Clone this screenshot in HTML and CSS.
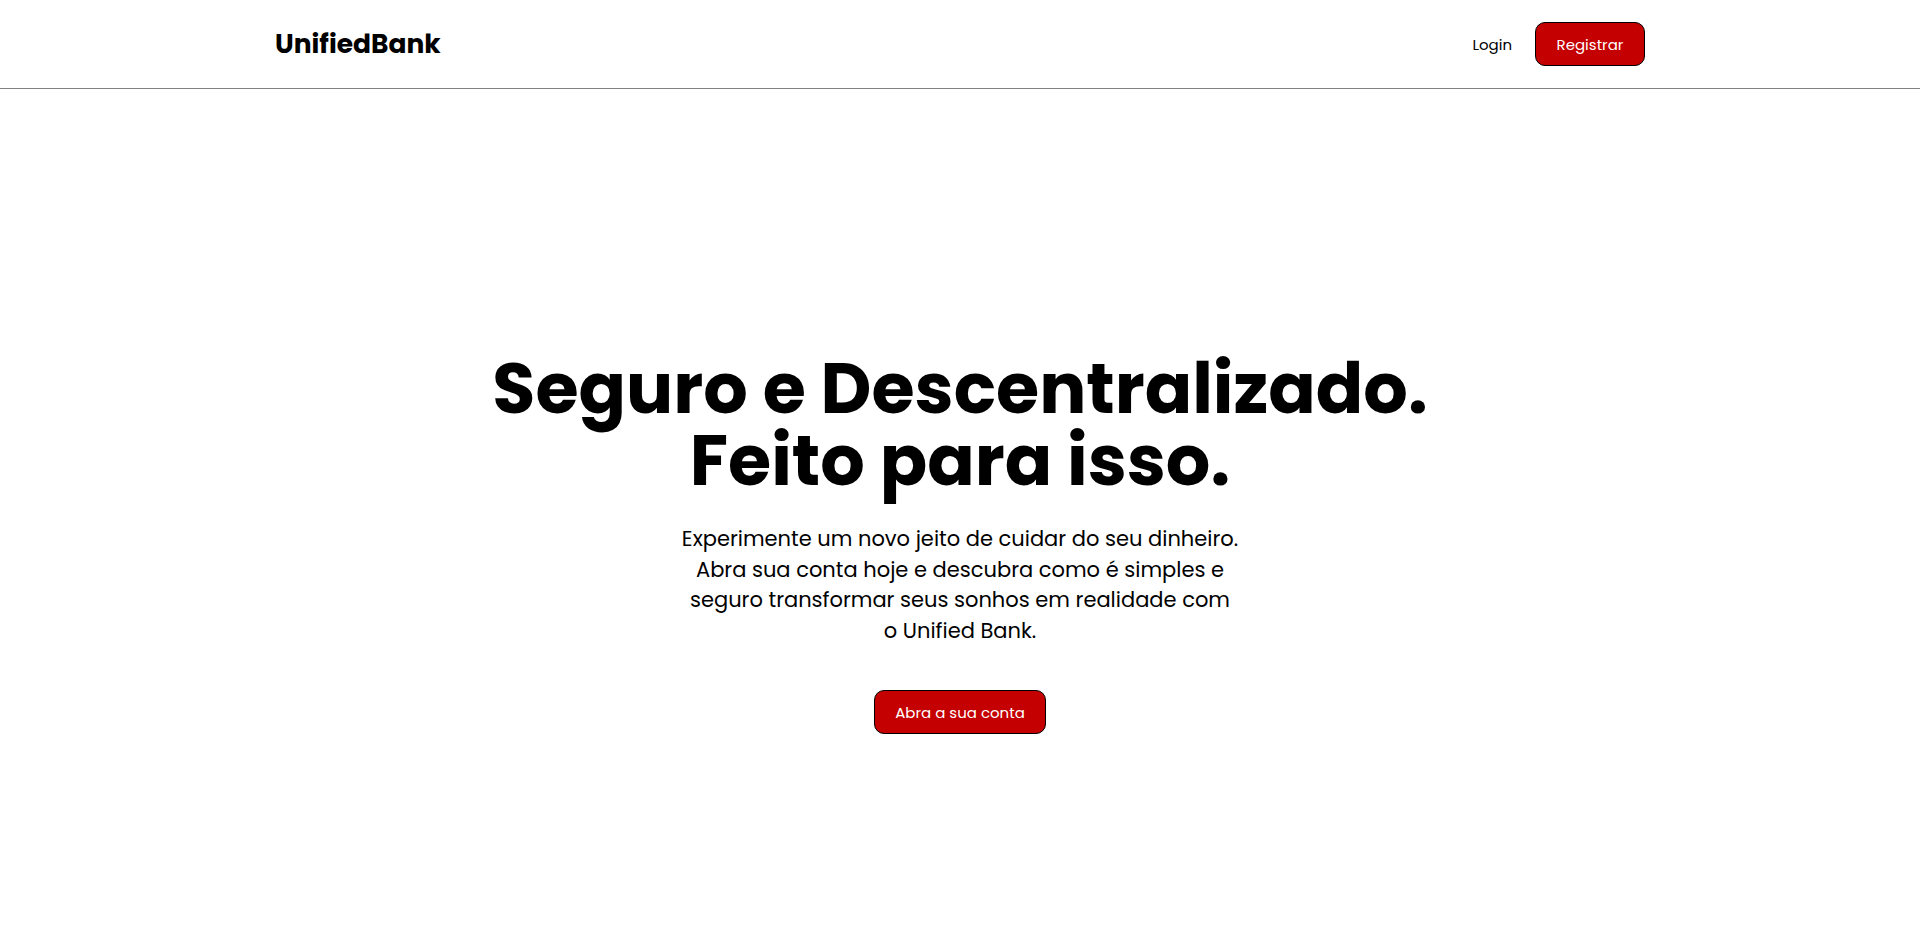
FILE: index.html
```html
<!DOCTYPE html>
<html lang="pt-BR">
<head>
<meta charset="utf-8">
<title>UnifiedBank</title>
<link rel="stylesheet" href="styles.css">
</head>
<body>
<header class="header">
  <div class="header-inner">
    <div class="logo">UnifiedBank</div>
    <nav class="nav">
      <a class="nav-link" href="#">Login</a>
      <a class="btn btn-nav" href="#">Registrar</a>
    </nav>
  </div>
</header>
<main class="hero">
  <h1 class="hero-title">Seguro e Descentralizado.<br>Feito para isso.</h1>
  <p class="hero-text">Experimente um novo jeito de cuidar do seu dinheiro. Abra sua conta hoje e descubra como é simples e seguro transformar seus sonhos em realidade com o Unified Bank.</p>
  <a class="btn btn-hero" href="#">Abra a sua conta</a>
</main>
</body>
</html>
```
FILE: styles.css
```css
* { box-sizing: border-box; }
html, body { margin: 0; padding: 0; }
body {
  font-family: "Poppins", "Inter", "Noto Sans", sans-serif;
  color: #000;
  background: #fff;
}
.header {
  height: 89px;
  border-bottom: 1px solid #808080;
}
.header-inner {
  max-width: 1370px;
  height: 88px;
  margin: 0 auto;
  display: flex;
  align-items: center;
  justify-content: space-between;
}
.logo {
  font-weight: 700;
  font-size: 26.5px;
}
.nav {
  display: flex;
  align-items: center;
  gap: 23px;
}
.nav-link {
  color: #000;
  text-decoration: none;
  font-size: 15px;
}
.btn {
  display: inline-flex;
  align-items: center;
  justify-content: center;
  background: #c40000;
  color: #fff;
  text-decoration: none;
  border: 1px solid #000;
  border-radius: 10px;
  font-size: 15px;
}
.btn-nav {
  width: 110px;
  height: 44px;
}
.hero {
  display: flex;
  flex-direction: column;
  align-items: center;
  text-align: center;
  padding-top: 264px;
}
.hero-title {
  margin: 0;
  font-size: 70px;
  line-height: 72px;
  font-weight: 700;
}
.hero-text {
  margin: 27px 0 0;
  max-width: 558px;
  font-size: 21px;
  line-height: 30.5px;
}
.btn-hero {
  margin-top: 44px;
  width: 172px;
  height: 44px;
}
```
